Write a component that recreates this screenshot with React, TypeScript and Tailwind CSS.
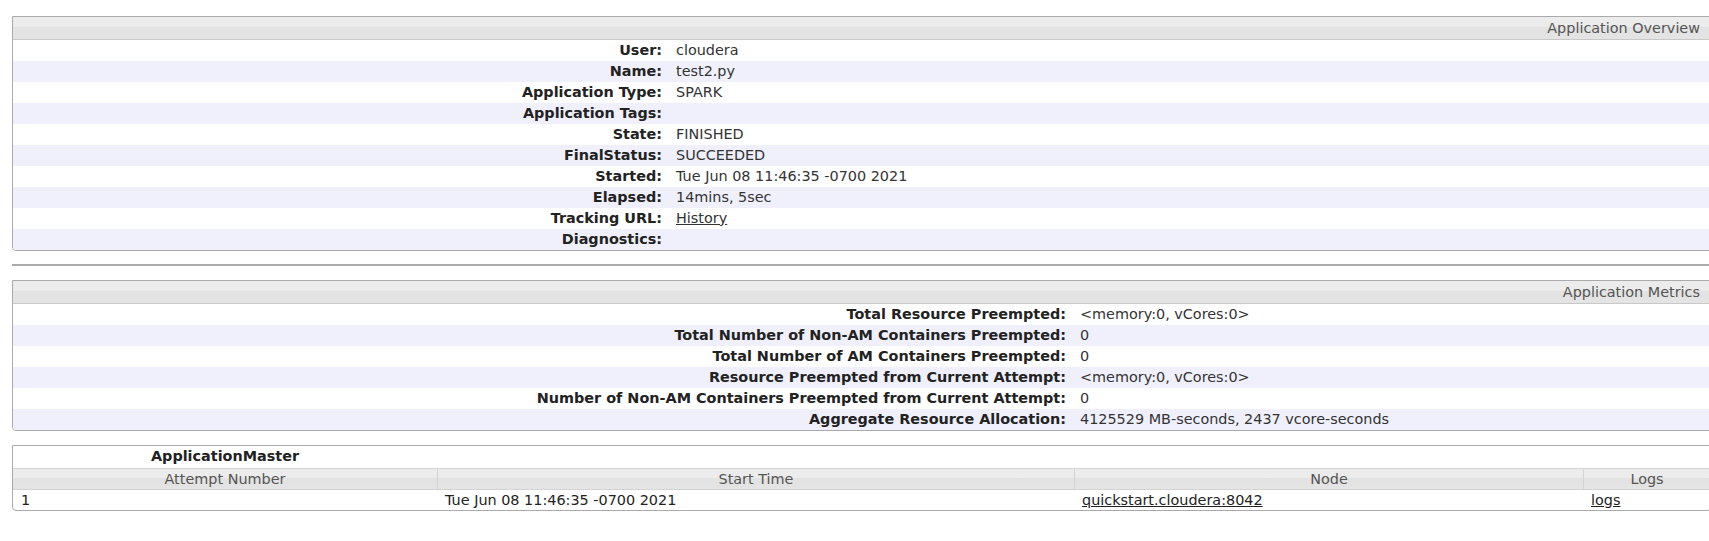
const overview: [string, string, boolean?][] = [
  ["User:", "cloudera"],
  ["Name:", "test2.py"],
  ["Application Type:", "SPARK"],
  ["Application Tags:", ""],
  ["State:", "FINISHED"],
  ["FinalStatus:", "SUCCEEDED"],
  ["Started:", "Tue Jun 08 11:46:35 -0700 2021"],
  ["Elapsed:", "14mins, 5sec"],
  ["Tracking URL:", "History", true],
  ["Diagnostics:", ""],
];

const metrics: [string, string][] = [
  ["Total Resource Preempted:", "<memory:0, vCores:0>"],
  ["Total Number of Non-AM Containers Preempted:", "0"],
  ["Total Number of AM Containers Preempted:", "0"],
  ["Resource Preempted from Current Attempt:", "<memory:0, vCores:0>"],
  ["Number of Non-AM Containers Preempted from Current Attempt:", "0"],
  ["Aggregate Resource Allocation:", "4125529 MB-seconds, 2437 vcore-seconds"],
];

const headBg =
  "bg-[linear-gradient(#ececec_0%,#ececec_45%,#e2e2e2_45%,#e4e4e4_100%)]";

function InfoPanel({
  title,
  rows,
  labelWidth,
}: {
  title: string;
  rows: [string, string, boolean?][];
  labelWidth: string;
}) {
  return (
    <div className="mr-[-4px] border border-[#aaaaaa] rounded-b-[4px] overflow-hidden">
      <div
        className={`h-[23px] border-b border-[#c8c8c8] ${headBg} text-right pr-[12px] leading-[23px] text-[#555555]`}
      >
        {title}
      </div>
      {rows.map(([label, value, link], i) => (
        <div
          key={label}
          className={`flex h-[21px] items-center ${i % 2 === 1 ? "bg-[#f0f0fc]" : "bg-white"}`}
        >
          <div className={`${labelWidth} shrink-0 text-right font-bold text-[#222222]`}>
            {label}
          </div>
          <div className={`pl-[14px] text-[#333333] ${link ? "underline" : ""}`}>
            {value}
          </div>
        </div>
      ))}
    </div>
  );
}

export default function App() {
  return (
    <div
      className="min-h-screen bg-white pl-[12px] pt-[16px] text-[14.4px] overflow-hidden"
      style={{ fontFamily: '"DejaVu Sans", sans-serif' }}
    >
      <InfoPanel title="Application Overview" rows={overview} labelWidth="w-[649px]" />

      <div className="mt-[13px] h-[2px] bg-[#aaaaaa]" />

      <div className="mt-[14px]">
        <InfoPanel title="Application Metrics" rows={metrics} labelWidth="w-[1053px]" />
      </div>

      <div className="mt-[14px] mr-[-2px] border border-[#aaaaaa] rounded-b-[4px] overflow-hidden">
        <div className="grid grid-cols-[424px_637px_509px_1fr] h-[22px] items-center bg-white">
          <div className="text-center font-bold text-[#222222]">ApplicationMaster</div>
        </div>
        <div
          className={`grid grid-cols-[424px_637px_509px_1fr] h-[22px] border-y border-[#d3d3d3] ${headBg} text-[#555555] leading-[20px]`}
        >
          <div className="text-center">Attempt Number</div>
          <div className="text-center border-l border-[#d3d3d3]">Start Time</div>
          <div className="text-center border-l border-[#d3d3d3]">Node</div>
          <div className="text-center border-l border-[#d3d3d3]">Logs</div>
        </div>
        <div className="grid grid-cols-[424px_637px_509px_1fr] h-[20px] items-center text-[#222222]">
          <div className="pl-[8px]">1</div>
          <div className="pl-[8px]">Tue Jun 08 11:46:35 -0700 2021</div>
          <div className="pl-[8px] underline">quickstart.cloudera:8042</div>
          <div className="pl-[8px] underline">logs</div>
        </div>
      </div>
    </div>
  );
}
